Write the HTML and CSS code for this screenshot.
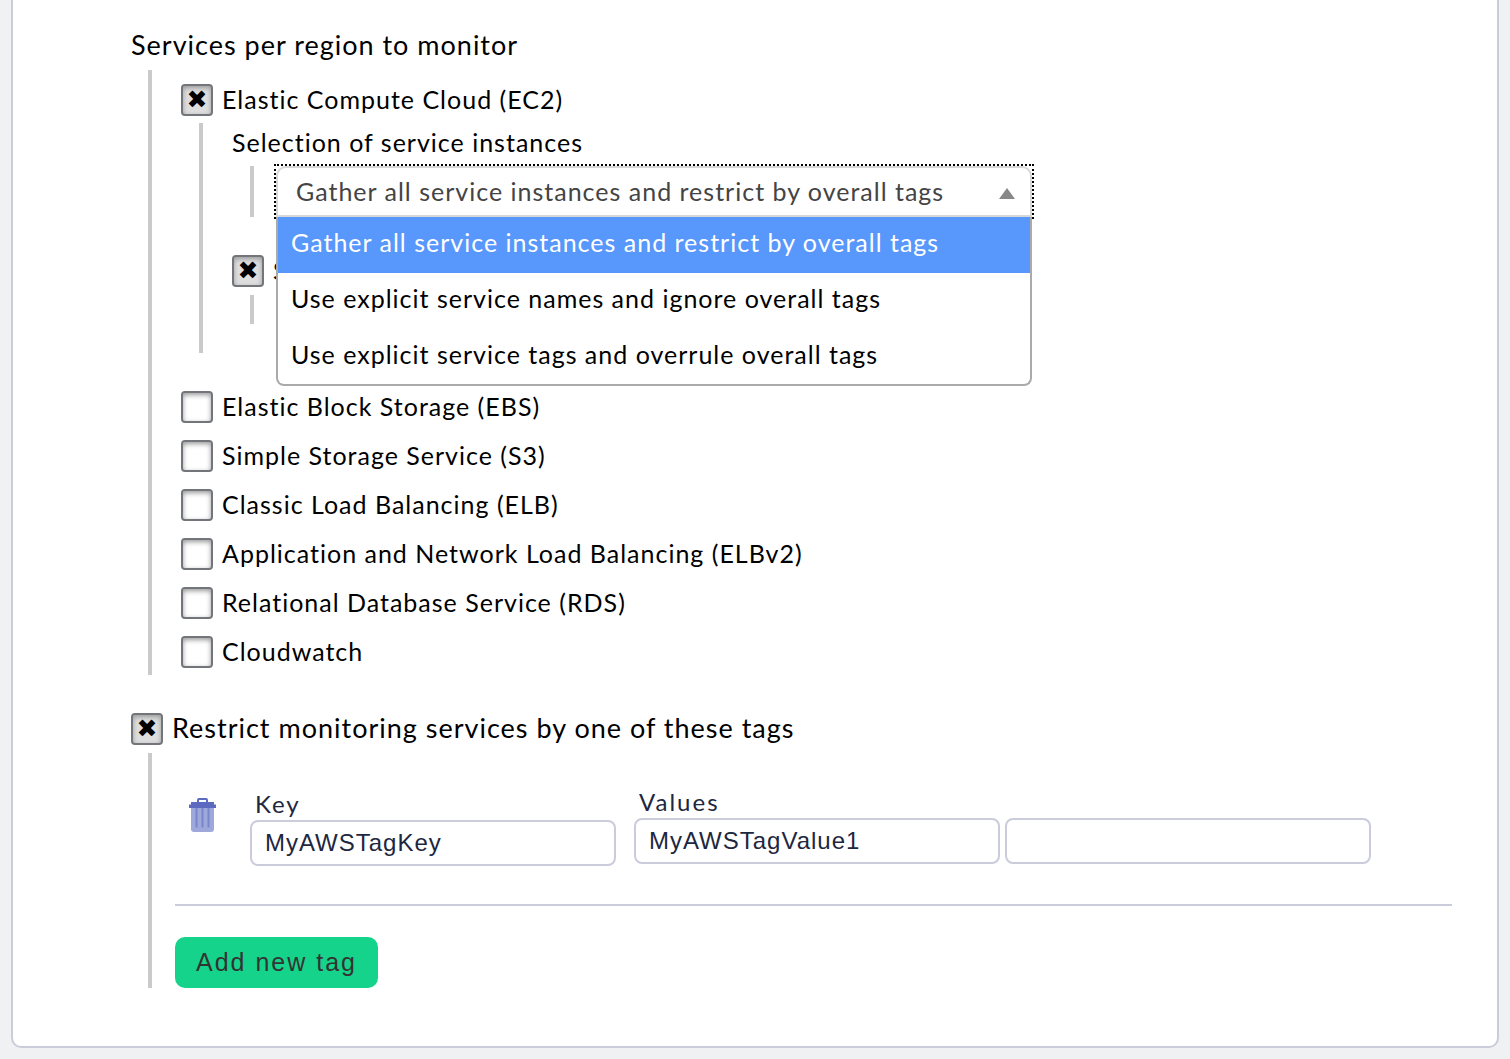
FILE: index.html
```html
<!DOCTYPE html>
<html lang="en">
<head>
<meta charset="utf-8">
<meta name="viewport" content="width=device-width, initial-scale=1">
<title>Amazon Web Services</title>
<link rel="stylesheet" href="styles.css">
</head>
<body>
<form class="panel">
  <section class="section">
    <h2 class="title">Services per region to monitor</h2>
    <div class="group services">
      <label class="check"><input type="checkbox" checked>Elastic Compute Cloud (EC2)</label>
      <div class="group ec2">
        <label class="sub-title" for="selection">Selection of service instances</label>
        <div class="group select-group">
          <div class="dropdown">
            <select id="selection" class="select">
              <option>Gather all service instances and restrict by overall tags</option>
            </select>
            <svg class="arrow" viewBox="0 0 16 11" aria-hidden="true"><path d="M8 0L16 11H0Z"/></svg>
            <ul class="options" role="listbox" aria-label="Selection of service instances">
              <li class="option active" role="option" aria-selected="true">Gather all service instances and restrict by overall tags</li>
              <li class="option" role="option">Use explicit service names and ignore overall tags</li>
              <li class="option" role="option">Use explicit service tags and overrule overall tags</li>
            </ul>
          </div>
        </div>
        <label class="check limits"><input type="checkbox" checked>Service limits</label>
        <div class="group limits-group"></div>
      </div>
      <div class="check-list">
        <label class="check"><input type="checkbox">Elastic Block Storage (EBS)</label>
        <label class="check"><input type="checkbox">Simple Storage Service (S3)</label>
        <label class="check"><input type="checkbox">Classic Load Balancing (ELB)</label>
        <label class="check"><input type="checkbox">Application and Network Load Balancing (ELBv2)</label>
        <label class="check"><input type="checkbox">Relational Database Service (RDS)</label>
        <label class="check"><input type="checkbox">Cloudwatch</label>
      </div>
    </div>
  </section>

  <section class="section">
    <label class="check title"><input type="checkbox" checked>Restrict monitoring services by one of these tags</label>
    <div class="group tags">
      <div class="tag-row">
        <button class="delete" type="button" aria-label="Delete tag">
          <svg class="trash" viewBox="0 0 27 34" aria-hidden="true">
            <path d="M2 8H25V31Q25 34 22 34H5Q2 34 2 31Z" fill="#9fa8da"/>
            <path d="M7.500 10V29.500M13.500 10V29.500M19.500 10V29.500" stroke="#7986cb" stroke-width="2"/>
            <path d="M9 5V2Q9 1 10 1H17Q18 1 18 2V5" fill="none" stroke="#5c6bc0" stroke-width="2"/>
            <path d="M2 4H25V6.500H27V10H0V6.500H2Z" fill="#5c6bc0"/>
          </svg>
        </button>
        <div class="field key">
          <label for="tag-key">Key</label>
          <input id="tag-key" class="text" type="text" value="MyAWSTagKey">
        </div>
        <div class="field">
          <label for="tag-value">Values</label>
          <div class="values">
            <input id="tag-value" class="text" type="text" value="MyAWSTagValue1">
            <input class="text" type="text" aria-label="Next value">
          </div>
        </div>
      </div>
      <hr class="rule">
      <button class="add" type="button">Add new tag</button>
    </div>
  </section>
</form>
</body>
</html>
```
FILE: styles.css
```css
* {
  box-sizing: border-box;
}

body {
  margin: 0;
  background: #f0f1f3;
  color: #000;
  font: 25px/32px Lato, sans-serif;
  letter-spacing: 1px;
}

.panel {
  margin: 0 11px 11px;
  padding: 29px 45px 58px 118px;
  border: 2px solid #caccdc;
  border-top: 0;
  border-radius: 0 0 10px 10px;
  background: #fff;
}

.section + .section {
  margin-top: 38px;
}

.title {
  margin: 0;
  font-size: 27px;
  font-weight: 400;
}

/* Nested settings hang off a vertical guide line */
.group {
  margin-left: 17px;
  border-left: 4px solid #cacaca;
}

.services {
  margin-top: 9px;
  padding: 14px 0 7px 29px;
}

.ec2 {
  margin: 7px 0 0 18px;
  padding: 4px 0 29px 29px;
}

.sub-title {
  display: block;
  line-height: 30px;
}

.select-group {
  margin: 9px 0 0 18px;
  padding-left: 22px;
}

.limits {
  margin-top: 38px;
}

.limits-group {
  height: 29px;
  margin: 8px 0 0 18px;
}

.check-list {
  display: flex;
  flex-direction: column;
  gap: 17px;
  margin-top: 38px;
}

.check {
  display: flex;
  align-items: flex-start;
  gap: 9px;
  line-height: 30px;
}

.check input {
  display: grid;
  place-content: center;
  flex: none;
  width: 32px;
  height: 32px;
  margin: 0;
  appearance: none;
  border: 2px solid #72767b;
  border-radius: 4px;
  background: #fff;
  box-shadow: inset 0 2px 5px #999;
}

.check input:checked {
  background: #dedede;
}

.check input:checked::before {
  content: "\2716";
  font: 25px/28px "DejaVu Sans", sans-serif;
  letter-spacing: 0;
}

.dropdown {
  position: relative;
  max-width: 756px;
  outline: 2px dotted #000;
}

.select {
  display: block;
  width: 100%;
  height: 51px;
  padding: 0 48px 2px 18px;
  appearance: none;
  border: 2px solid #d8d8d8;
  border-radius: 10px 10px 0 0;
  outline: 0;
  background: #fff;
  color: #444;
  font: inherit;
  letter-spacing: inherit;
}

.arrow {
  position: absolute;
  top: 22px;
  right: 17px;
  width: 16px;
  height: 11px;
  fill: #888;
}

.options {
  position: absolute;
  z-index: 1;
  top: 51px;
  right: 0;
  left: 0;
  margin: 0;
  padding: 0;
  overflow: hidden;
  border: 2px solid #aaa;
  border-top: 0;
  border-radius: 0 0 8px 8px;
  background: #fff;
  list-style: none;
}

.option {
  padding: 9px 13px 15px;
}

.option:last-child {
  padding-bottom: 14px;
}

.option.active {
  background: #5897fb;
  color: #fff;
}

.tags {
  margin-top: 8px;
  padding-left: 23px;
}

.tag-row {
  display: flex;
  padding: 35px 0 38px;
}

.delete {
  width: 27px;
  height: 34px;
  margin: 10px 34px 0 14px;
  padding: 0;
  border: 0;
  background: none;
}

.trash {
  display: block;
}

.field {
  flex: 2 1 0;
  max-width: 737px;
  color: #1e2740;
  font-size: 24px;
  letter-spacing: 2px;
}

.field.key {
  flex: 1 1 0;
  max-width: 366px;
  margin: 2px 18px 0 0;
}

.field label {
  display: block;
  height: 30px;
  padding-left: 5px;
  line-height: 28px;
}

.values {
  display: flex;
  gap: 5px;
}

.text {
  width: 100%;
  min-width: 0;
  height: 46px;
  padding: 0 13px;
  border: 2px solid #caccdc;
  border-radius: 8px;
  background: #fff;
  color: #1e2740;
  font: 24px "Liberation Sans", Arial, sans-serif;
  letter-spacing: 1px;
}

.rule {
  height: 2px;
  margin: 0;
  border: 0;
  background: #caccdc;
}

.add {
  display: block;
  height: 51px;
  min-width: 203px;
  margin-top: 31px;
  padding: 0 19px;
  border: 0;
  border-radius: 10px;
  background: #15d38a;
  color: #333;
  font: 25px "Liberation Sans", Arial, sans-serif;
  letter-spacing: 2px;
}
```
